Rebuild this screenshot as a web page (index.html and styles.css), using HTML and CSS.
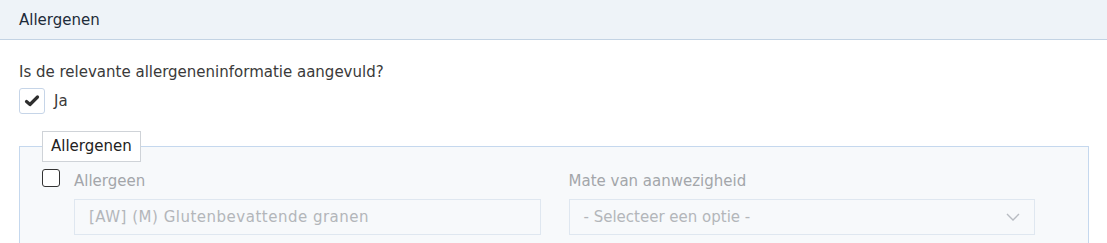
FILE: index.html
```html
<!DOCTYPE html>
<html lang="nl">
<head>
<meta charset="utf-8">
<link rel="stylesheet" href="styles.css">
</head>
<body>
<div class="panel">
  <div class="panel-header">Allergenen</div>
  <div class="panel-body">
    <div class="question">Is de relevante allergeneninformatie aangevuld?</div>
    <label class="check-row">
      <span class="check-box checked">
        <svg width="16" height="14" viewBox="0 0 16 14"><path d="M2.5 7.5 L6 10.5 L13.5 3" fill="none" stroke="#2e2e2e" stroke-width="3.2" stroke-linecap="round" stroke-linejoin="round"/></svg>
      </span>
      <span class="check-label">Ja</span>
    </label>
    <fieldset class="group">
      <legend class="group-legend">Allergenen</legend>
      <div class="group-row">
        <span class="small-box"></span>
        <div class="cols">
          <div class="col">
            <div class="field-label">Allergeen</div>
            <div class="input"><span class="value">[AW] (M) Glutenbevattende granen</span></div>
          </div>
          <div class="col">
            <div class="field-label">Mate van aanwezigheid</div>
            <div class="input select">
              <span>- Selecteer een optie -</span>
              <svg width="14" height="8" viewBox="0 0 14 8"><path d="M1 1 L7 7 L13 1" fill="none" stroke="#b8bcc2" stroke-width="1.4"/></svg>
            </div>
          </div>
        </div>
      </div>
    </fieldset>
  </div>
</div>
</body>
</html>
```

FILE: styles.css
```css
html, body {
  margin: 0;
  padding: 0;
  background: #fff;
}
body {
  font-family: "DejaVu Sans", sans-serif;
  font-size: 15px;
  color: #3a3a3a;
}
.panel-header {
  height: 40px;
  box-sizing: border-box;
  background: #eef3f8;
  border-bottom: 1px solid #c3d3e4;
  padding: 0 19px;
  display: flex;
  align-items: center;
  color: #1d2b3a;
}
.panel-body {
  padding: 22px 18px 0 19px;
}
.question {
  line-height: 20px;
  margin-bottom: 6px;
}
.check-row {
  display: flex;
  align-items: center;
  gap: 9px;
}
.check-box {
  width: 26px;
  height: 26px;
  box-sizing: border-box;
  border: 1px solid #c6d5e8;
  border-radius: 3px;
  background: #fff;
  display: flex;
  align-items: center;
  justify-content: center;
}
.group {
  margin: 17px 0 0 0;
  border: 1px solid #c5d8ee;
  background: #f7f9fb;
  padding: 0 0 0 22px;
  height: 150px;
  box-sizing: border-box;
}
.group-legend {
  background: #fff;
  border: 1px solid #cfd3d8;
  padding: 6px 8px;
  margin-left: 0;
  color: #222;
  line-height: 17px;
}
.group-row {
  display: flex;
  align-items: flex-start;
  gap: 14px;
  margin-top: 7px;
}
.small-box {
  width: 18px;
  height: 18px;
  box-sizing: border-box;
  border: 1px solid #333;
  border-radius: 3px;
  background: #fff;
  flex: none;
}
.cols {
  display: flex;
  gap: 28px;
  width: 961px;
}
.col {
  flex: 1;
}
.field-label {
  color: #a3a6aa;
  line-height: 24px;
  margin-bottom: 6px;
}
.input {
  height: 36px;
  box-sizing: border-box;
  border: 1px solid #dfe7f0;
  background: #f7f9fb;
  color: #b3b6ba;
  padding: 0 14px;
  display: flex;
  align-items: center;
}
.value {
  letter-spacing: 0.5px;
}
.select {
  justify-content: space-between;
}
```
